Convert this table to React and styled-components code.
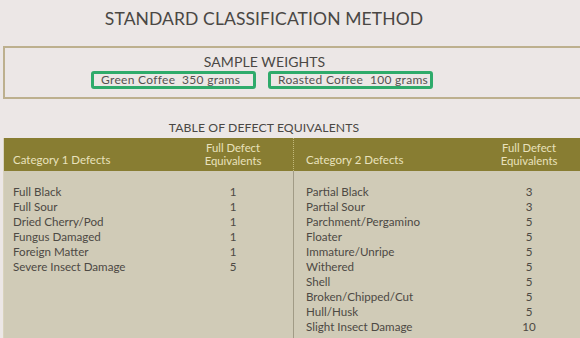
import React from "react";
import styled, { createGlobalStyle } from "styled-components";

const GlobalStyle = createGlobalStyle`
  html, body {
    margin: 0;
    padding: 0;
    background: #ece7e6;
    overflow: hidden;
  }
`;

const Page = styled.div`
  width: 580px;
  height: 338px;
  overflow: hidden;
  background: #ece7e6;
  font-family: Lato, "Noto Sans", sans-serif;
  color: #4b4844;
`;

const Title = styled.h1`
  margin: 0;
  padding: 8px 52px 0 0;
  text-align: center;
  font-size: 17.5px;
  font-weight: 400;
  letter-spacing: 0.1px;
  line-height: 22px;
  color: #4a4744;
`;

const WeightsBox = styled.section`
  margin: 16px 0 0 3px;
  width: 514px;
  height: 49px;
  box-sizing: content-box;
  border: 2px solid #bdb08e;
  border-right: none;
  padding-right: 86px;
  display: flex;
  flex-direction: column;
  align-items: center;
`;

const SubTitle = styled.h2`
  margin: 0;
  padding: 5px 0 0 5px;
  text-align: center;
  font-size: 14px;
  font-weight: 400;
  letter-spacing: 0.1px;
  line-height: 17px;
  color: #4a4744;
`;

const Weights = styled.div`
  display: flex;
  gap: 12px;
  margin-top: 1px;
`;

const WeightTag = styled.span`
  display: block;
  box-sizing: border-box;
  width: ${({ $w }) => $w}px;
  height: 18px;
  border: 3px solid #2fab6b;
  border-radius: 3px;
  padding-left: 7px;
  font-size: 12px;
  line-height: 12px;
  letter-spacing: 0.3px;
  white-space: pre;
  color: #555250;
`;

const TableTitle = styled.h2`
  margin: 0;
  padding: 21px 52px 0 0;
  text-align: center;
  font-size: 12.2px;
  font-weight: 400;
  letter-spacing: 0.1px;
  line-height: 16px;
  color: #4a4744;
`;

const Table = styled.div`
  margin: 2px 0 0 3px;
  display: grid;
  grid-template-columns: 289px 1fr;
  border-left: 1px solid #d9d3bd;
`;

const Column = styled.div`
  display: flex;
  flex-direction: column;
  & + & {
    border-left: 1px solid #a19b86;
  }
`;

const HeaderBand = styled.div`
  height: 33px;
  box-sizing: border-box;
  background: #887d32;
  display: grid;
  grid-template-columns: 1fr 64px;
  align-items: end;
  padding: 0 ${({ $pr }) => $pr}px 4px ${({ $pl }) => $pl}px;
  color: #e9e2bd;
  font-size: 11.5px;
  ${Column} + ${Column} & {
    border-left: 1px dotted #c2b97a;
    margin-left: -1px;
  }
`;

const HeadLabel = styled.span`
  line-height: 15px;
`;

const HeadValue = styled.span`
  text-align: center;
  line-height: 12.5px;
  font-size: 11.3px;
`;

const Body = styled.div`
  background: #d0cbb7;
  height: 170px;
  padding: 13px ${({ $pr }) => $pr}px 0 ${({ $pl }) => $pl}px;
  display: grid;
  grid-template-columns: 1fr 64px;
  grid-auto-rows: 15px;
  align-content: start;
  font-size: 11.6px;
  line-height: 15px;
  color: #4d4944;
`;

const Name = styled.span`
  white-space: nowrap;
`;

const Value = styled.span`
  text-align: center;
`;

const cat1 = [
  ["Full Black", 1],
  ["Full Sour", 1],
  ["Dried Cherry/Pod", 1],
  ["Fungus Damaged", 1],
  ["Foreign Matter", 1],
  ["Severe Insect Damage", 5],
];

const cat2 = [
  ["Partial Black", 3],
  ["Partial Sour", 3],
  ["Parchment/Pergamino", 5],
  ["Floater", 5],
  ["Immature/Unripe", 5],
  ["Withered", 5],
  ["Shell", 5],
  ["Broken/Chipped/Cut", 5],
  ["Hull/Husk", 5],
  ["Slight Insect Damage", 10],
];

const DefectColumn = ({ label, rows, pl, pr }) => (
  <Column>
    <HeaderBand $pl={pl} $pr={pr}>
      <HeadLabel>{label}</HeadLabel>
      <HeadValue>
        Full Defect
        <br />
        Equivalents
      </HeadValue>
    </HeaderBand>
    <Body $pl={pl} $pr={pr}>
      {rows.map(([name, v]) => (
        <React.Fragment key={name}>
          <Name>{name}</Name>
          <Value>{v}</Value>
        </React.Fragment>
      ))}
    </Body>
  </Column>
);

export default function App() {
  return (
    <>
      <GlobalStyle />
      <Page>
        <Title>STANDARD CLASSIFICATION METHOD</Title>
        <WeightsBox>
          <SubTitle>SAMPLE WEIGHTS</SubTitle>
          <Weights>
            <WeightTag $w={165}>{"Green Coffee  350 grams"}</WeightTag>
            <WeightTag $w={165}>{"Roasted Coffee  100 grams"}</WeightTag>
          </Weights>
        </WeightsBox>
        <TableTitle>TABLE OF DEFECT EQUIVALENTS</TableTitle>
        <Table>
          <DefectColumn label="Category 1 Defects" rows={cat1} pl={9} pr={28} />
          <DefectColumn label="Category 2 Defects" rows={cat2} pl={12} pr={19} />
        </Table>
      </Page>
    </>
  );
}
